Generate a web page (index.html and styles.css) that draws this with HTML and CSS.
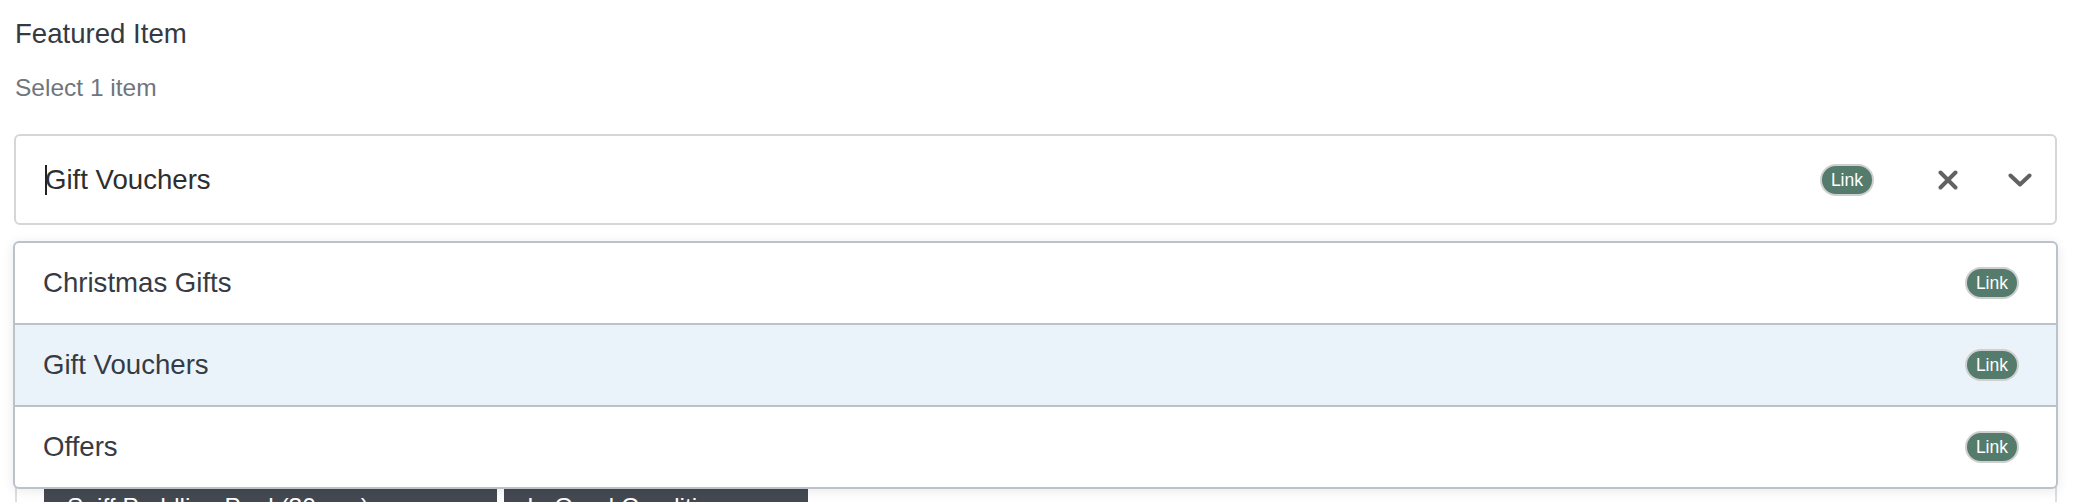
FILE: index.html
```html
<!DOCTYPE html>
<html lang="en">
<head>
<meta charset="utf-8">
<title>Featured Item</title>
<link rel="stylesheet" href="styles.css">
</head>
<body>
<div class="field">
  <label class="label">Featured Item</label>
  <div class="help">Select 1 item</div>
  <div class="select">
    <div class="control">
      <div class="value"><span class="caret"></span>Gift Vouchers</div>
      <div class="indicators">
        <span class="badge">Link</span>
        <span class="icon clear">
          <svg width="20" height="20" viewBox="0 0 20 20"><path d="M2.5 2.5 L17.5 17.5 M17.5 2.5 L2.5 17.5" stroke="#626262" stroke-width="4" stroke-linecap="round" fill="none"/></svg>
        </span>
        <span class="icon chevron">
          <svg width="24" height="14" viewBox="0 0 24 14"><path d="M2.5 2.5 L12 11.5 L21.5 2.5" stroke="#626262" stroke-width="4" stroke-linecap="round" stroke-linejoin="round" fill="none"/></svg>
        </span>
      </div>
    </div>
    <ul class="menu">
      <li class="option"><span>Christmas Gifts</span><span class="badge">Link</span></li>
      <li class="option active"><span>Gift Vouchers</span><span class="badge">Link</span></li>
      <li class="option"><span>Offers</span><span class="badge">Link</span></li>
    </ul>
  </div>
  <div class="selected">
    <span class="chip">Sniff Paddling Pool (30 pcs)</span>
    <span class="chip">In Good Condition</span>
  </div>
</div>
</body>
</html>
```
FILE: styles.css
```css
* { box-sizing: border-box; }
html, body { margin: 0; padding: 0; background: #fff; }
body {
  font-family: "Liberation Sans", Arial, Helvetica, sans-serif;
  color: #343a40;
  overflow: hidden;
}
.field { padding: 13px 17px 0 14px; }
.label {
  display: block;
  font-size: 27.6px;
  line-height: 42px;
  color: #353a42;
  padding-left: 1px;
}
.help {
  margin-top: 15px;
  font-size: 24.5px;
  line-height: 36px;
  color: #70757c;
  padding-left: 1px;
}
.select { position: relative; margin-top: 28px; }
.control {
  height: 91px;
  border: 2px solid #d6d6da;
  border-radius: 6px;
  display: flex;
  align-items: center;
  padding: 0 23px 0 29px;
}
.value {
  flex: 1;
  font-size: 27.6px;
  color: #2e2e2e;
  display: flex;
  align-items: center;
}
.caret {
  display: inline-block;
  width: 1.5px;
  height: 30px;
  background: #222;
  margin-right: -1.5px;
}
.indicators { display: flex; align-items: center; }
.badge {
  display: inline-block;
  background: #547b6c;
  color: #fff;
  font-size: 17.5px;
  line-height: 28px;
  height: 32px;
  padding: 0 9px;
  border: 2px solid #cfcfcf;
  border-radius: 16px;
}
.icon { display: flex; align-items: center; }
.clear { margin-left: 64px; }
.chevron { margin-left: 50px; }
.menu {
  position: absolute;
  top: 107px;
  left: -1px;
  right: -1px;
  margin: 0;
  padding: 0;
  list-style: none;
  background: #fff;
  border: 2px solid #bcc2cc;
  border-radius: 6px;
  box-shadow: 0 2px 12px rgba(0, 0, 0, 0.09);
  z-index: 5;
  overflow: hidden;
}
.option {
  height: 82px;
  display: flex;
  align-items: center;
  justify-content: space-between;
  padding: 0 37px 0 28px;
  font-size: 27.6px;
  color: #363b43;
  border-bottom: 2px solid #bcc2cc;
}
.option:last-child { border-bottom: none; height: 80px; }
.option.active { background: #ebf3fa; }
.selected {
  margin-top: 16px;
  margin-left: 1px;
  border: 2px solid #dedede;
  border-bottom: none;
  border-radius: 6px 6px 0 0;
  padding: 246px 0 0 27px;
  display: flex;
  gap: 7px;
}
.chip {
  display: inline-block;
  background: #444951;
  color: #fff;
  font-size: 24.5px;
  line-height: 36px;
  padding: 0 23px;
}
.chip:first-child { width: 453px; }
.chip:nth-child(2) { width: 304px; }
```
